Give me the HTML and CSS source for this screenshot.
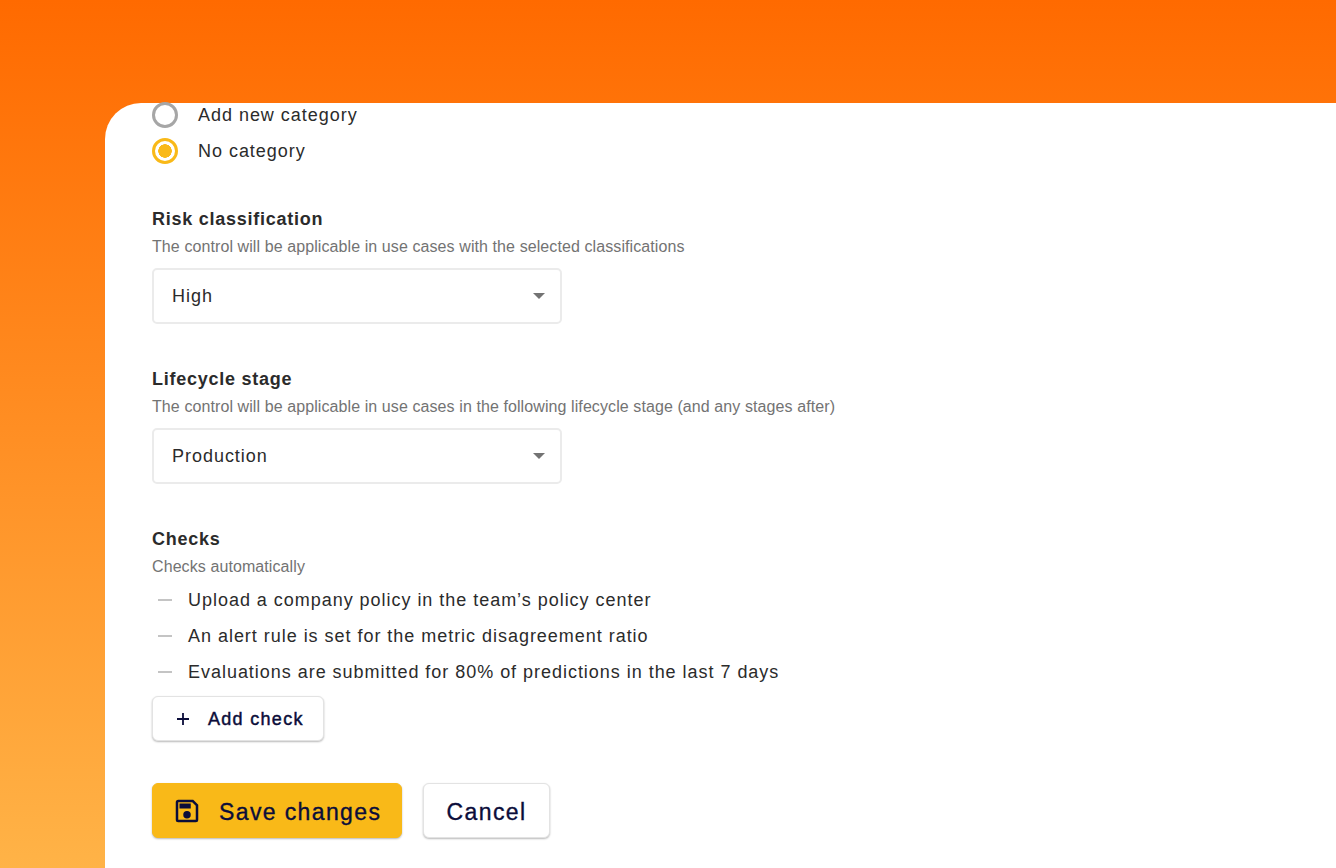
FILE: index.html
```html
<!DOCTYPE html>
<html lang="en">
<head>
<meta charset="utf-8">
<title>Edit control</title>
<link rel="stylesheet" href="styles.css">
</head>
<body>
<main class="panel">
  <div class="radios">
    <label class="radio-row"><span class="radio"></span><span>Add new category</span></label>
    <label class="radio-row"><span class="radio radio-on"></span><span>No category</span></label>
  </div>

  <section class="field">
    <h2 class="field-title">Risk classification</h2>
    <p class="field-help">The control will be applicable in use cases with the selected classifications</p>
    <div class="select"><span>High</span><span class="caret"></span></div>
  </section>

  <section class="field">
    <h2 class="field-title">Lifecycle stage</h2>
    <p class="field-help">The control will be applicable in use cases in the following lifecycle stage (and any stages after)</p>
    <div class="select"><span>Production</span><span class="caret"></span></div>
  </section>

  <section class="field">
    <h2 class="field-title">Checks</h2>
    <p class="field-help">Checks automatically</p>
    <ul class="checks">
      <li class="check"><span class="dash"></span><span>Upload a company policy in the team’s policy center</span></li>
      <li class="check"><span class="dash"></span><span>An alert rule is set for the metric disagreement ratio</span></li>
      <li class="check"><span class="dash"></span><span>Evaluations are submitted for 80% of predictions in the last 7 days</span></li>
    </ul>
    <button class="btn btn-add" type="button">
      <svg class="plus" width="14" height="14" viewBox="0 0 14 14" aria-hidden="true"><path d="M7 1v12M1 7h12" fill="none" stroke="currentColor" stroke-width="1.8"/></svg>
      <span>Add check</span>
    </button>
  </section>

  <div class="actions">
    <button class="btn btn-large btn-save" type="button">
      <svg width="30" height="30" viewBox="0 0 24 24" aria-hidden="true"><path fill="currentColor" d="M17 3H5a2 2 0 0 0-2 2v14a2 2 0 0 0 2 2h14a2 2 0 0 0 2-2V7l-4-4zm2 16H5V5h11.17L19 7.83V19zm-7-7a3 3 0 1 0 0 6 3 3 0 0 0 0-6zM6 6h9v4H6V6z"/></svg>
      <span>Save changes</span>
    </button>
    <button class="btn btn-large btn-cancel" type="button">Cancel</button>
  </div>
</main>
</body>
</html>
```
FILE: styles.css
```css
* { box-sizing: border-box; }

html, body { height: 100%; margin: 0; }

body {
  height: 868px;
  overflow: hidden;
  padding: 103px 0 0 105px;
  background: linear-gradient(180deg, #ff6a00 0%, #ffb347 100%);
  font-family: "Liberation Sans", Arial, sans-serif;
  color: #2b2b2b;
}

.panel {
  display: flow-root;
  height: 765px;
  padding: 0 0 0 47px;
  background: #fff;
  border-top-left-radius: 36px;
}

.radios { display: flex; flex-direction: column; gap: 10px; margin-top: -1px; }

.radio-row {
  display: flex;
  align-items: center;
  gap: 20px;
  height: 26px;
  font-size: 18px;
  letter-spacing: 0.97px;
}

.radio {
  width: 26px;
  height: 26px;
  border: 3px solid #a6a6a6;
  border-radius: 50%;
  flex: none;
}

.radio-on {
  border-color: #f9b918;
  background: radial-gradient(circle, #f9b918 0 6.5px, #fff 7px);
}

.field { margin-top: 43px; }

.field-title {
  margin: 0;
  font-size: 18px;
  line-height: 24px;
  font-weight: 700;
  letter-spacing: 0.75px;
}

.field-help {
  margin: 7px 0 0;
  font-size: 16px;
  line-height: 18px;
  color: #737373;
  letter-spacing: 0.09px;
}

.select {
  display: flex;
  align-items: center;
  justify-content: space-between;
  width: 410px;
  height: 56px;
  margin-top: 12px;
  padding: 0 15px 0 18px;
  border: 2px solid #ebebeb;
  border-radius: 5px;
  font-size: 18px;
  letter-spacing: 0.97px;
}

.caret {
  width: 0;
  height: 0;
  border-left: 6.5px solid transparent;
  border-right: 6.5px solid transparent;
  border-top: 6.5px solid #737373;
}

.checks { list-style: none; margin: 6px 0 0; padding: 0; }

.check {
  display: flex;
  align-items: center;
  height: 36px;
  font-size: 18px;
  letter-spacing: 0.97px;
}

.dash {
  width: 14px;
  height: 2px;
  margin: 0 16px 0 6px;
  background: #c4c4c4;
  flex: none;
}

.btn {
  display: inline-flex;
  align-items: center;
  font-family: inherit;
  color: #0b0d3a;
  background: #fff;
  border: 1px solid #e3e3e3;
  border-radius: 6px;
  box-shadow: 0 1px 2px rgba(0, 0, 0, 0.28);
  cursor: pointer;
}

.btn-add {
  width: 172px;
  height: 45px;
  margin-top: 6px;
  padding: 2px 0 0 23px;
  gap: 18px;
  font-size: 18px;
  letter-spacing: 1.3px;
  -webkit-text-stroke: 0.45px currentColor;
}

.plus { margin-bottom: 2px; }

.actions { display: flex; gap: 21px; margin-top: 42px; }

.btn-large {
  height: 55px;
  padding-top: 4px;
  font-size: 23px;
  letter-spacing: 1.38px;
  -webkit-text-stroke: 0.35px currentColor;
}

.btn-save {
  width: 250px;
  padding-left: 19px;
  gap: 17px;
  background: #f9b918;
  border-color: #f9b918;
}

.btn-save svg { margin-bottom: 2px; }

.btn-cancel { width: 127px; justify-content: center; }
```
